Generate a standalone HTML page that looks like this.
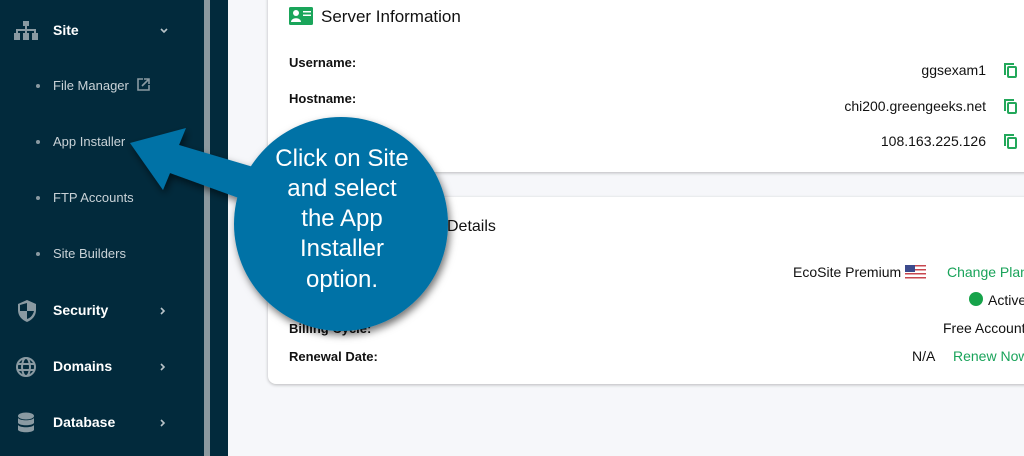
<!DOCTYPE html>
<html><head><meta charset="utf-8"><style>
*{margin:0;padding:0;box-sizing:border-box}
body{width:1024px;height:456px;overflow:hidden;background:#f6f7fa;font-family:"Liberation Sans",sans-serif;position:relative}
div{white-space:nowrap}
.side{position:absolute;left:0;top:0;width:228px;height:456px;background:#022a3c}
.bar{position:absolute;left:204px;top:0;width:6px;height:456px;background:#8c999f}
.it{position:absolute;left:53px;color:#fff;font-weight:bold;font-size:14px}
.sub{position:absolute;left:53px;color:#c9d2d7;font-size:13px}
.dot{position:absolute;left:36px;width:4px;height:4px;border-radius:2px;background:#8a9aa2}
.chev{position:absolute;left:159px}
.card{position:absolute;left:268px;width:790px;background:#fff;border-radius:8px;box-shadow:0 1px 3px rgba(0,0,0,.25)}
.lab{position:absolute;left:289px;font-weight:bold;font-size:13px;color:#111}
.val{position:absolute;font-size:14px;color:#111;text-align:right}
.grn{color:#19a35a}
.cp{position:absolute;left:1007px;width:10px;height:12px;border:2px solid #22a85a;border-radius:2px}
.cp:before{content:"";position:absolute;left:-5px;top:-5px;width:8px;height:10px;border-left:2px solid #22a85a;border-top:2px solid #22a85a}
</style></head><body>
<div class="side"></div><div class="bar"></div>
<svg style="position:absolute;left:14px;top:21px" width="24" height="20" viewBox="0 0 24 20" fill="#8a9aa2"><rect x="9" y="0" width="6" height="5"/><rect x="11" y="5" width="2" height="4"/><rect x="2" y="8" width="20" height="2"/><rect x="2" y="8" width="2" height="5"/><rect x="11" y="8" width="2" height="5"/><rect x="20" y="8" width="2" height="5"/><rect x="0" y="12" width="6" height="7"/><rect x="9" y="12" width="6" height="7"/><rect x="18" y="12" width="6" height="7"/></svg>
<div class="it" style="top:22px">Site</div>
<svg class="chev" style="top:27px" width="10" height="8" viewBox="0 0 10 8"><path d="M2 2L5 5L8 2" fill="none" stroke="#b8c3c8" stroke-width="1.6"/></svg>
<div class="dot" style="top:84px"></div><div class="sub" style="top:78px">File Manager <svg width="13" height="13" viewBox="0 0 13 13" style="vertical-align:-1px;margin-left:5px" fill="none" stroke="#8a9aa2" stroke-width="1.6"><path d="M6 1H1V12H12V7"/><path d="M7 1H12V6M12 1L5 8"/></svg></div>
<div class="dot" style="top:140px"></div><div class="sub" style="top:134px">App Installer</div>
<div class="dot" style="top:196px"></div><div class="sub" style="top:190px">FTP Accounts</div>
<div class="dot" style="top:252px"></div><div class="sub" style="top:246px">Site Builders</div>
<svg style="position:absolute;left:17px;top:300px" width="20" height="22" viewBox="0 0 20 22"><path d="M10 0L19 4V10C19 16 15 20 10 22C5 20 1 16 1 10V4Z" fill="#8a9aa2"/><path d="M10 3V11H3V5L10 3Z M10 11H17C16 15 13.5 18 10 19Z" fill="#022a3c"/></svg>
<div class="it" style="top:302px">Security</div>
<svg class="chev" style="top:306px" width="8" height="10" viewBox="0 0 8 10"><path d="M2 2L5 5L2 8" fill="none" stroke="#b8c3c8" stroke-width="1.6"/></svg>
<svg style="position:absolute;left:15px;top:356px" width="22" height="22" viewBox="0 0 22 22" fill="none" stroke="#8a9aa2" stroke-width="2"><circle cx="11" cy="11" r="9"/><ellipse cx="11" cy="11" rx="4" ry="9"/><path d="M2 8H20M2 14H20"/></svg>
<div class="it" style="top:358px">Domains</div>
<svg class="chev" style="top:362px" width="8" height="10" viewBox="0 0 8 10"><path d="M2 2L5 5L2 8" fill="none" stroke="#b8c3c8" stroke-width="1.6"/></svg>
<svg style="position:absolute;left:17px;top:412px" width="18" height="22" viewBox="0 0 18 22" fill="#8a9aa2"><ellipse cx="9" cy="4" rx="8" ry="3.5"/><path d="M1 6C3 9 15 9 17 6V11C15 14 3 14 1 11Z"/><path d="M1 13C3 16 15 16 17 13V18C15 21 3 21 1 18Z"/></svg>
<div class="it" style="top:414px">Database</div>
<svg class="chev" style="top:418px" width="8" height="10" viewBox="0 0 8 10"><path d="M2 2L5 5L2 8" fill="none" stroke="#b8c3c8" stroke-width="1.6"/></svg>

<div class="card" style="top:-10px;height:182px"></div>
<svg style="position:absolute;left:289px;top:7px" width="24" height="18" viewBox="0 0 24 18"><rect width="24" height="18" rx="1.5" fill="#1aa55a"/><circle cx="7" cy="6" r="3" fill="#fff"/><path d="M2 15C2 10 12 10 12 15Z" fill="#fff"/><rect x="14" y="4" width="8" height="1.5" fill="#fff"/><rect x="14" y="7.5" width="8" height="1.5" fill="#fff"/></svg>
<div style="position:absolute;left:321px;top:7px;font-size:17px;color:#111">Server Information</div>
<div class="lab" style="top:55px">Username:</div>
<div class="lab" style="top:91px">Hostname:</div>
<div class="val" style="right:38px;top:62px">ggsexam1</div><div class="cp" style="top:66px"></div>
<div class="val" style="right:38px;top:98px">chi200.greengeeks.net</div><div class="cp" style="top:102px"></div>
<div class="val" style="right:38px;top:133px">108.163.225.126</div><div class="cp" style="top:137px"></div>

<div class="card" style="top:197px;height:187px"></div>
<div style="position:absolute;left:447px;top:218px;font-size:16px;color:#111">Details</div>
<div class="val" style="left:793px;top:264px">EcoSite Premium <svg width="21" height="14" viewBox="0 0 21 14" style="vertical-align:-2px"><rect width="21" height="14" fill="#fff"/><g fill="#c8474f"><rect y="0" width="21" height="1.5"/><rect y="4" width="21" height="1.5"/><rect y="8" width="21" height="1.5"/><rect y="12" width="21" height="1.5"/></g><rect width="10" height="7" fill="#3c4a8c"/></svg></div>
<div class="val grn" style="left:947px;top:264px">Change Plan</div>
<div style="position:absolute;left:969px;top:292px;width:14px;height:14px;border-radius:7px;background:#16a34a"></div>
<div class="val" style="left:988px;top:292px">Active</div>
<div class="lab" style="top:321px">Billing Cycle:</div>
<div class="val" style="left:943px;top:320px">Free Account</div>
<div class="lab" style="top:349px">Renewal Date:</div>
<div class="val" style="left:912px;top:348px">N/A</div><div class="val grn" style="left:953px;top:348px">Renew Now</div>

<svg style="position:absolute;left:0;top:0" width="1024" height="456">
<defs><filter id="sh" x="-30%" y="-30%" width="160%" height="160%"><feDropShadow dx="2" dy="4" stdDeviation="4" flood-color="#000" flood-opacity=".55"/></filter></defs>
<g filter="url(#sh)" fill="#0672a6">
<path d="M130 143L186 128L179 145L270 172L258 205L170 173L163 190Z"/>
<circle cx="341" cy="224" r="107"/>
</g>
<g fill="#fff" font-family="Liberation Sans, sans-serif" font-size="24" text-anchor="middle">
<text x="342" y="166">Click on Site</text>
<text x="342" y="196">and select</text>
<text x="342" y="226">the App</text>
<text x="342" y="256">Installer</text>
<text x="342" y="287">option.</text>
</g>
</svg>
</body></html>
